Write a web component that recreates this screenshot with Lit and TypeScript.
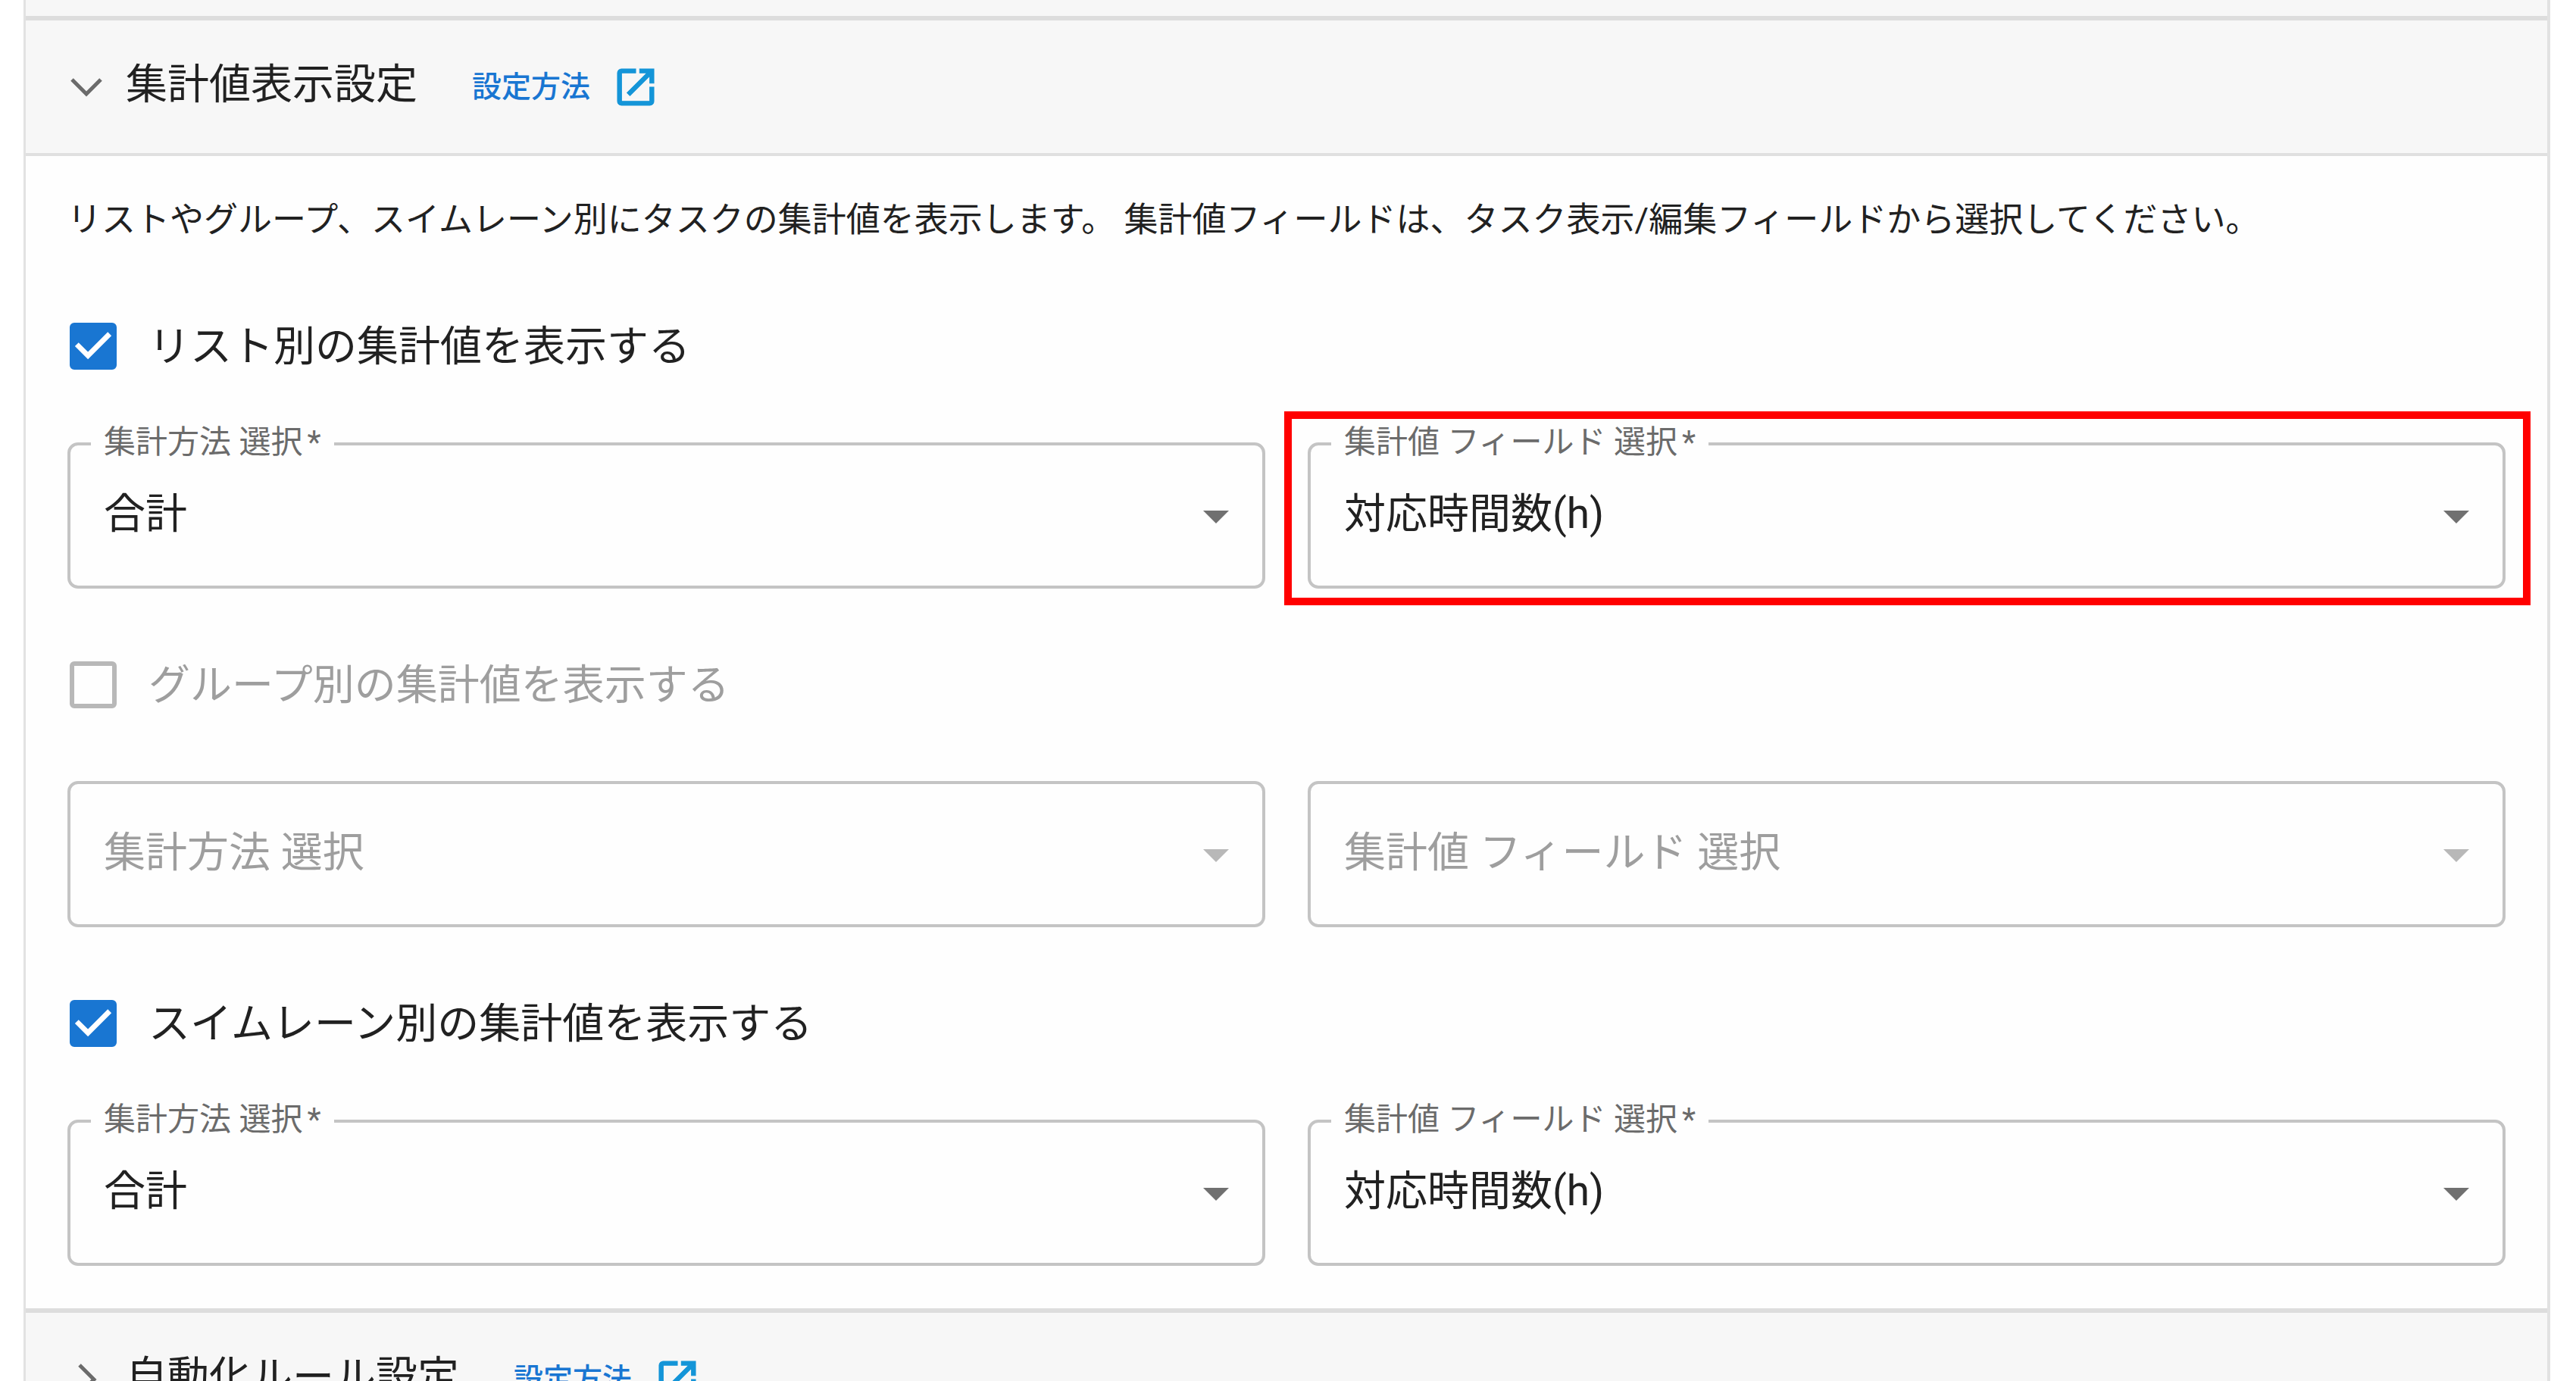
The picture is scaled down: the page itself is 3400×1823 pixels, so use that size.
import { LitElement, html, css, svg, nothing } from "lit";
import { customElement, property } from "lit/decorators.js";

interface Choice {
  label: string;
  value: string;
  marked?: boolean;
}

interface Aggregate {
  id: string;
  title: string;
  enabled: boolean;
  fields: Choice[];
}

const aggregates: Aggregate[] = [
  {
    id: "list",
    title: "リスト別の集計値を表示する",
    enabled: true,
    fields: [
      { label: "集計方法 選択", value: "合計" },
      { label: "集計値 フィールド 選択", value: "対応時間数(h)", marked: true },
    ],
  },
  {
    id: "group",
    title: "グループ別の集計値を表示する",
    enabled: false,
    fields: [
      { label: "集計方法 選択", value: "" },
      { label: "集計値 フィールド 選択", value: "" },
    ],
  },
  {
    id: "swimlane",
    title: "スイムレーン別の集計値を表示する",
    enabled: true,
    fields: [
      { label: "集計方法 選択", value: "合計" },
      { label: "集計値 フィールド 選択", value: "対応時間数(h)" },
    ],
  },
];

@customElement("section-header")
export class SectionHeader extends LitElement {
  @property() title = "";
  @property({ type: Boolean }) open = false;

  static styles = css`
    :host {
      display: flex;
      box-sizing: border-box;
      align-items: center;
      height: 185px;
      padding: 0 48px;
      border-top: 6px solid #dddddd;
      border-bottom: 4px solid #e0e0e0;
      background: #f7f7f7;
    }
    .toggle {
      display: flex;
      align-items: center;
      gap: 20px;
      padding: 0;
      border: 0;
      background: none;
      color: #212121;
      font: inherit;
      font-size: 55px;
      line-height: 64px;
      cursor: pointer;
    }
    .chevron {
      width: 64px;
      height: 64px;
      fill: none;
      stroke: #6b6b6b;
      stroke-width: 5;
    }
    .name {
      padding-bottom: 8px;
    }
    .help {
      display: flex;
      align-items: center;
      gap: 28px;
      margin-left: 72px;
      color: #1976d2;
      font-size: 39px;
      font-weight: 500;
      line-height: 64px;
      text-decoration: none;
    }
    .external {
      width: 64px;
      height: 64px;
      fill: #1495d8;
      stroke: #1495d8;
      stroke-width: 0.4;
    }
  `;

  render() {
    return html`
      <button class="toggle" type="button" aria-expanded=${this.open ? "true" : "false"}>
        <svg class="chevron" viewBox="0 0 64 64" aria-hidden="true">
          ${this.open
            ? svg`<path d="M13 22 L32 41 L51 22" />`
            : svg`<path d="M23 13 L42 32 L23 51" />`}
        </svg>
        <span class="name">${this.title}</span>
      </button>
      <a class="help" href="#help">
        設定方法
        <svg class="external" viewBox="0 0 24 24" aria-hidden="true">
          <path
            d="M19 19H5V5h7V3H5c-1.11 0-2 .9-2 2v14c0 1.1.89 2 2 2h14c1.1 0 2-.9 2-2v-7h-2v7zM14 3v2h3.59l-9.83 9.83 1.41 1.41L19 6.41V10h2V3h-7z"
          />
        </svg>
      </a>
    `;
  }
}

@customElement("app-root")
export class AppRoot extends LitElement {
  static styles = css`
    :host {
      display: block;
      box-sizing: border-box;
      height: 100vh;
      overflow: hidden;
      padding: 0 34px 0 31px;
      background: #ffffff;
      color: #212121;
      font-family: Roboto, "Noto Sans CJK JP", sans-serif;
    }
    *,
    *::before {
      box-sizing: border-box;
    }
    .panel {
      border: solid #e2e2e2;
      border-width: 0 4px 0 3px;
    }
    .previous {
      height: 21px;
      background: #f7f7f7;
    }
    .body {
      padding: 53px 55px 56px;
      background: #fefefe;
    }
    .description {
      margin: 0 0 93px;
      font-size: 45px;
      line-height: 64px;
    }
    .groups {
      display: flex;
      flex-direction: column;
      gap: 86px;
    }
    .check {
      display: flex;
      align-items: center;
      gap: 42px;
      height: 82px;
      margin-bottom: 86px;
      padding-left: 3px;
      font-size: 55px;
      line-height: 82px;
    }
    .check.off {
      color: #9e9e9e;
    }
    .box {
      display: grid;
      width: 62px;
      height: 62px;
    }
    .box > * {
      grid-area: 1 / 1;
    }
    .box input {
      appearance: none;
      width: 62px;
      height: 62px;
      margin: 0;
      border: 6px solid #b8b8b8;
      border-radius: 6px;
    }
    .box input:checked {
      border-color: #1976d2;
      background: #1976d2;
    }
    .tick {
      width: 62px;
      height: 62px;
      fill: #ffffff;
      pointer-events: none;
    }
    .fields {
      display: grid;
      grid-template-columns: 1fr 1fr;
      gap: 56px;
    }
    .field {
      position: relative;
      display: grid;
      align-items: center;
      height: 193px;
      border: 4px solid #c4c4c4;
      border-radius: 14px;
    }
    .field > select,
    .field > .arrow {
      grid-area: 1 / 1;
    }
    select {
      appearance: none;
      width: 100%;
      height: 100%;
      padding: 0 120px 6px 44px;
      border: 0;
      outline: 0;
      background: transparent;
      color: #212121;
      font: inherit;
      font-size: 55px;
      opacity: 1;
    }
    select:disabled {
      color: #9e9e9e;
    }
    .arrow {
      justify-self: end;
      width: 34px;
      height: 17px;
      margin: 4px 44px 0 0;
      fill: #707070;
      pointer-events: none;
    }
    .off .arrow {
      fill: #b8b8b8;
    }
    .caption {
      position: absolute;
      top: -28px;
      left: 27px;
      padding: 0 17px;
      background: #fefefe;
      color: #6b6b6b;
      font-size: 42px;
      line-height: 48px;
      white-space: nowrap;
    }
    .required {
      margin-left: 6px;
    }
    .marked::before {
      content: "";
      position: absolute;
      inset: -45px -37px -26px -35px;
      border: 10px solid #ff0000;
      pointer-events: none;
    }
  `;

  private field(group: Aggregate, choice: Choice, index: number) {
    const id = `${group.id}-${index}`;
    return html`
      <div class="field ${group.enabled ? "" : "off"} ${choice.marked ? "marked" : ""}">
        ${group.enabled
          ? html`<label class="caption" for=${id}
              >${choice.label}<span class="required">*</span></label
            >`
          : nothing}
        <select id=${id} aria-label=${choice.label} ?disabled=${!group.enabled}>
          <option>${choice.value || choice.label}</option>
        </select>
        <svg class="arrow" viewBox="0 0 34 17" aria-hidden="true">
          <path d="M0 0 H34 L17 17 Z" />
        </svg>
      </div>
    `;
  }

  private group(group: Aggregate) {
    return html`
      <div>
        <label class="check ${group.enabled ? "" : "off"}">
          <span class="box">
            <input type="checkbox" .checked=${group.enabled} ?disabled=${!group.enabled} />
            ${group.enabled
              ? html`<svg class="tick" viewBox="3 3 18 18" aria-hidden="true">
                  <path d="M10 17l-5-5 1.41-1.41L10 14.17l7.59-7.59L19 8l-9 9z" />
                </svg>`
              : nothing}
          </span>
          <span>${group.title}</span>
        </label>
        <div class="fields">
          ${group.fields.map((choice, index) => this.field(group, choice, index))}
        </div>
      </div>
    `;
  }

  render() {
    return html`
      <main class="panel">
        <div class="previous"></div>
        <section-header title="集計値表示設定" open></section-header>
        <section class="body">
          <p class="description">
            リストやグループ、スイムレーン別にタスクの集計値を表示します。 集計値フィールドは、タスク表示/編集フィールドから選択してください。
          </p>
          <div class="groups">${aggregates.map((group) => this.group(group))}</div>
        </section>
        <section-header title="自動化ルール設定"></section-header>
      </main>
    `;
  }
}
